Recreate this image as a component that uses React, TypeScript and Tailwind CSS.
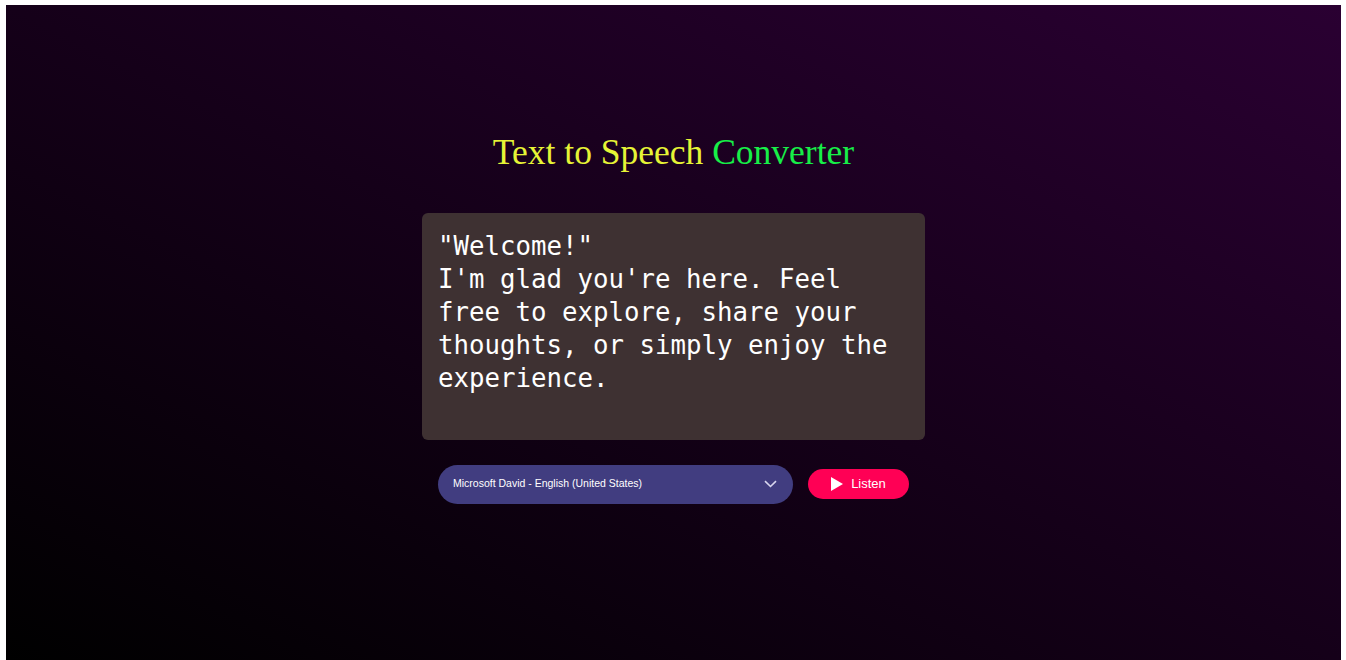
import React from "react";

export default function App() {
  const text =
    '"Welcome!"\nI\'m glad you\'re here. Feel free to explore, share your thoughts, or simply enjoy the experience.';
  return (
    <div className="w-[1346px] h-[660px] bg-white pt-[5px] pl-[6px] pr-[5px]">
      <div className="h-[655px] w-full bg-[linear-gradient(to_top_right,#000000,#2a0032)] flex flex-col items-center justify-center pb-[30px]">
        <h1 className="text-[35.5px] leading-[41px] font-['Liberation_Serif',serif] text-[#e6f436]">
          Text to Speech <span className="text-[#17ef48]">Converter</span>
        </h1>
        <div className="mt-[40px] w-[503px] flex flex-col">
          <textarea
            defaultValue={text}
            spellCheck={false}
            className="w-[503px] h-[227px] resize-none rounded-[6px] bg-[#3e3132] text-white px-[16px] pt-[17px] pb-[15px] text-[25.75px] leading-[33px] font-['DejaVu_Sans_Mono',monospace] outline-none border-none"
          />
          <div className="mt-[25px] px-[16px] flex items-center gap-[15px]">
            <div className="flex-1 h-[39px] rounded-full bg-[#413d80] flex items-center justify-between pl-[15px] pr-[16px]">
              <span className="text-white text-[10.5px] font-['Liberation_Sans',Arial,sans-serif]">
                Microsoft David - English (United States)
              </span>
              <svg width="13" height="8" viewBox="0 0 13 8" fill="none">
                <path d="M1 1.2L6.5 6.5L12 1.2" stroke="#d8d6ee" strokeWidth="1.6" />
              </svg>
            </div>
            <button className="w-[101px] h-[30px] rounded-full bg-[#ff0055] flex items-center justify-center gap-[8px] text-white text-[13px] font-['Liberation_Sans',Arial,sans-serif]">
              <svg width="12" height="14" viewBox="0 0 12 14">
                <path d="M0 0L12 7L0 14Z" fill="white" />
              </svg>
              Listen
            </button>
          </div>
        </div>
      </div>
    </div>
  );
}
